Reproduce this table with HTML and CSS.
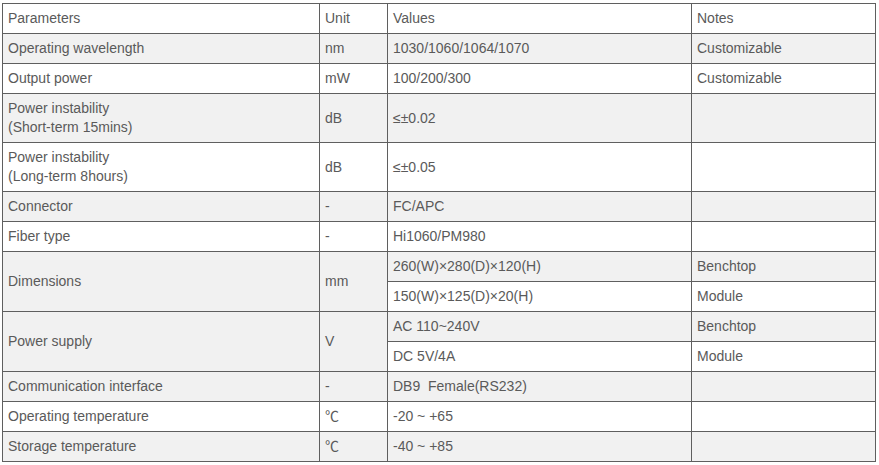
FILE: index.html
```html
<!DOCTYPE html>
<html>
<head>
<meta charset="utf-8">
<link rel="stylesheet" href="styles.css">
</head>
<body>
<table class="spec">
  <colgroup>
    <col class="c1"><col class="c2"><col class="c3"><col class="c4">
  </colgroup>
  <tr><td>Parameters</td><td>Unit</td><td>Values</td><td>Notes</td></tr>
  <tr><td>Operating wavelength</td><td>nm</td><td>1030/1060/1064/1070</td><td>Customizable</td></tr>
  <tr><td>Output power</td><td>mW</td><td>100/200/300</td><td>Customizable</td></tr>
  <tr><td>Power instability<br>(Short-term 15mins)</td><td>dB</td><td>≤±0.02</td><td></td></tr>
  <tr><td>Power instability<br>(Long-term 8hours)</td><td>dB</td><td>≤±0.05</td><td></td></tr>
  <tr><td>Connector</td><td>-</td><td>FC/APC</td><td></td></tr>
  <tr><td>Fiber type</td><td>-</td><td>Hi1060/PM980</td><td></td></tr>
  <tr><td rowspan="2">Dimensions</td><td rowspan="2">mm</td><td>260(W)×280(D)×120(H)</td><td>Benchtop</td></tr>
  <tr><td>150(W)×125(D)×20(H)</td><td>Module</td></tr>
  <tr><td rowspan="2">Power supply</td><td rowspan="2">V</td><td>AC 110~240V</td><td>Benchtop</td></tr>
  <tr><td>DC 5V/4A</td><td>Module</td></tr>
  <tr><td>Communication interface</td><td>-</td><td>DB9&nbsp; Female(RS232)</td><td></td></tr>
  <tr><td>Operating temperature</td><td>℃</td><td>-20 ~ +65</td><td></td></tr>
  <tr><td>Storage temperature</td><td>℃</td><td>-40 ~ +85</td><td></td></tr>
</table>
</body>
</html>
```
FILE: styles.css
```css
html, body {
  margin: 0;
  padding: 0;
  background: #fff;
}
body {
  padding: 3px 0 0 2px;
  font-family: "Liberation Sans", Arial, "Noto Sans CJK SC", sans-serif;
  font-size: 14px;
  color: #5a5a5a;
}
.spec {
  border-collapse: collapse;
  table-layout: fixed;
  width: 873px;
}
.spec .c1 { width: 317px; }
.spec .c2 { width: 68px; }
.spec .c3 { width: 304px; }
.spec .c4 { width: 184px; }
.spec td {
  border: 1px solid #5f5f5f;
  padding: 5px;
  line-height: 19px;
  height: 19px;
  vertical-align: middle;
  text-align: left;
}
.spec tr:nth-child(even) td {
  background: #f1f1f1;
}
```
